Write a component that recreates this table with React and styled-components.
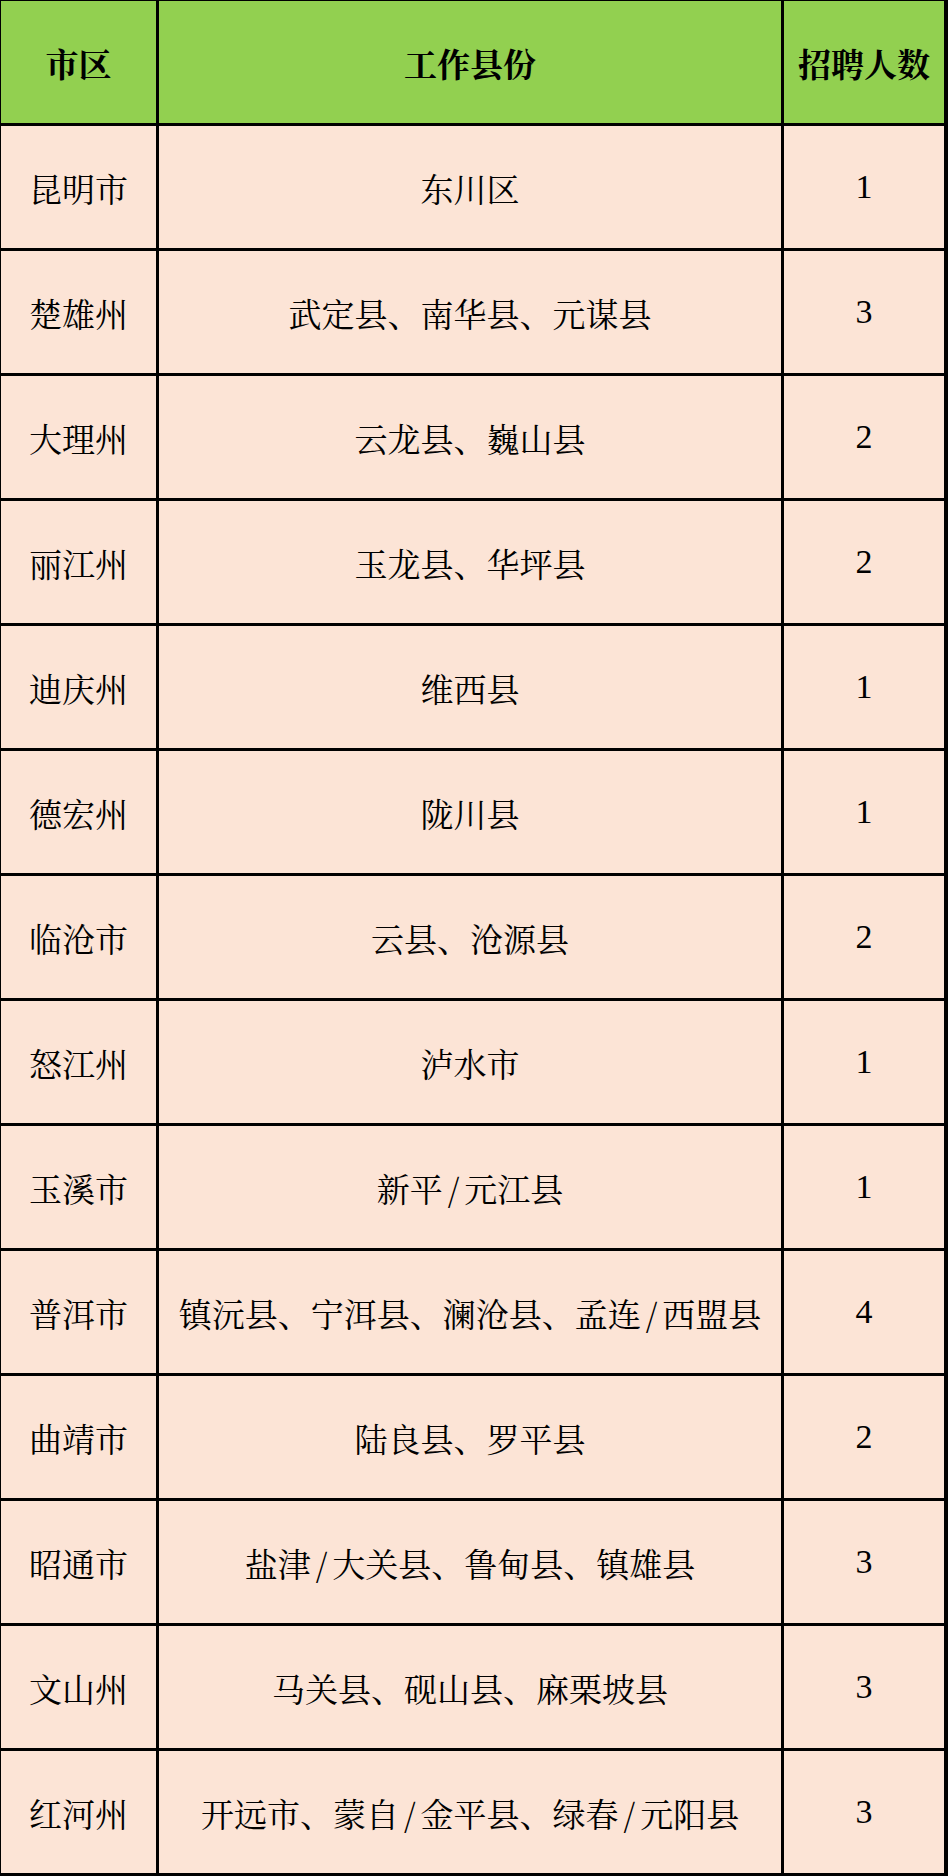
import { Fragment } from 'react';
import styled, { createGlobalStyle } from 'styled-components';

const GlobalStyle = createGlobalStyle`
  html, body {
    margin: 0;
    padding: 0;
    background: #ffffff;
  }
`;

const Grid = styled.div`
  width: 948px;
  box-sizing: border-box;
  display: grid;
  grid-template-columns: 155px 622px 160px;
  grid-auto-rows: 122px;
  gap: 3px;
  padding: 1px 4px 3px 1px;
  background: #000;
  font-family: "Noto Serif CJK SC", "Liberation Serif", "Noto Sans CJK SC", serif;
  color: #000;
`;

const Cell = styled.div`
  display: flex;
  align-items: center;
  justify-content: center;
  background: ${(p) => (p.$head ? '#92d050' : '#fce4d6')};
  font-size: ${(p) => (p.$num ? '34px' : '33px')};
  font-weight: ${(p) => (p.$head ? 700 : 400)};
  font-family: ${(p) =>
    p.$num ? '"Liberation Serif", serif' : 'inherit'};
  white-space: nowrap;
`;

// slash in the source is a wide half-width glyph
const Slash = styled.span`
  margin: 0 5px;
`;

const rows = [
  ['昆明市', '东川区', 1],
  ['楚雄州', '武定县、南华县、元谋县', 3],
  ['大理州', '云龙县、巍山县', 2],
  ['丽江州', '玉龙县、华坪县', 2],
  ['迪庆州', '维西县', 1],
  ['德宏州', '陇川县', 1],
  ['临沧市', '云县、沧源县', 2],
  ['怒江州', '泸水市', 1],
  ['玉溪市', '新平/元江县', 1],
  ['普洱市', '镇沅县、宁洱县、澜沧县、孟连/西盟县', 4],
  ['曲靖市', '陆良县、罗平县', 2],
  ['昭通市', '盐津/大关县、鲁甸县、镇雄县', 3],
  ['文山州', '马关县、砚山县、麻栗坡县', 3],
  ['红河州', '开远市、蒙自/金平县、绿春/元阳县', 3],
];

const withSlashes = (text) =>
  text.split('/').map((part, i) => (
    <Fragment key={i}>
      {i > 0 && <Slash>/</Slash>}
      {part}
    </Fragment>
  ));

export default function App() {
  return (
    <>
      <GlobalStyle />
      <Grid>
        <Cell $head>市区</Cell>
        <Cell $head>工作县份</Cell>
        <Cell $head>招聘人数</Cell>
        {rows.map(([city, county, n]) => (
          <Fragment key={city}>
            <Cell>{city}</Cell>
            <Cell>{withSlashes(county)}</Cell>
            <Cell $num>{n}</Cell>
          </Fragment>
        ))}
      </Grid>
    </>
  );
}
